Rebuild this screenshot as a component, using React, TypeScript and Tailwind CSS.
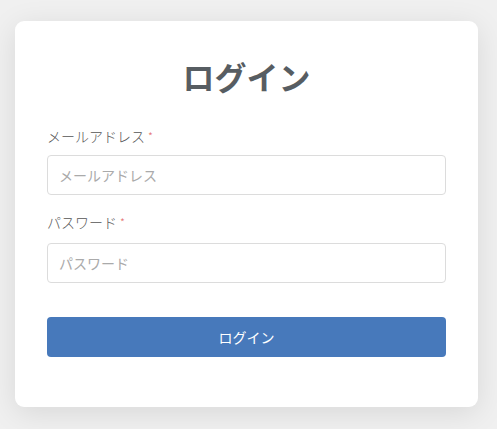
import React from "react";

export default function App() {
  return (
    <div
      className="w-[497px] h-[429px] bg-[#f0f0f0] overflow-hidden pt-[21px] pl-[15px]"
      style={{ fontFamily: '"Noto Sans CJK JP", "Noto Sans", sans-serif' }}
    >
      <div className="w-[463px] h-[386px] bg-white rounded-[9px] shadow-[0_6px_30px_rgba(0,0,0,0.10)] px-[32px] pt-[36px]">
        <h1 className="text-center text-[32px] leading-[38px] font-bold text-[#575d62]">
          ログイン
        </h1>
        <div className="mt-[31px]">
          <label className="block text-[14px] leading-[21px] text-[#555] font-light">
            メールアドレス<span className="text-[#e57373] text-[11px] align-top ml-[3px]">*</span>
          </label>
          <input
            placeholder="メールアドレス"
            className="mt-[8px] block w-full h-[40px] border border-[#dcdcdc] rounded-[4px] px-[11px] text-[14px] text-[#555] placeholder:text-[#aaa] outline-none"
          />
        </div>
        <div className="mt-[17px]">
          <label className="block text-[14px] leading-[21px] text-[#555] font-light">
            パスワード<span className="text-[#e57373] text-[11px] align-top ml-[3px]">*</span>
          </label>
          <input
            type="password"
            placeholder="パスワード"
            className="mt-[10px] block w-full h-[40px] border border-[#dcdcdc] rounded-[4px] px-[11px] text-[14px] text-[#555] placeholder:text-[#aaa] outline-none"
          />
        </div>
        <button className="mt-[34px] block w-full h-[40px] rounded-[4px] bg-[#4779bb] text-white text-[14px]">
          ログイン
        </button>
      </div>
    </div>
  );
}
